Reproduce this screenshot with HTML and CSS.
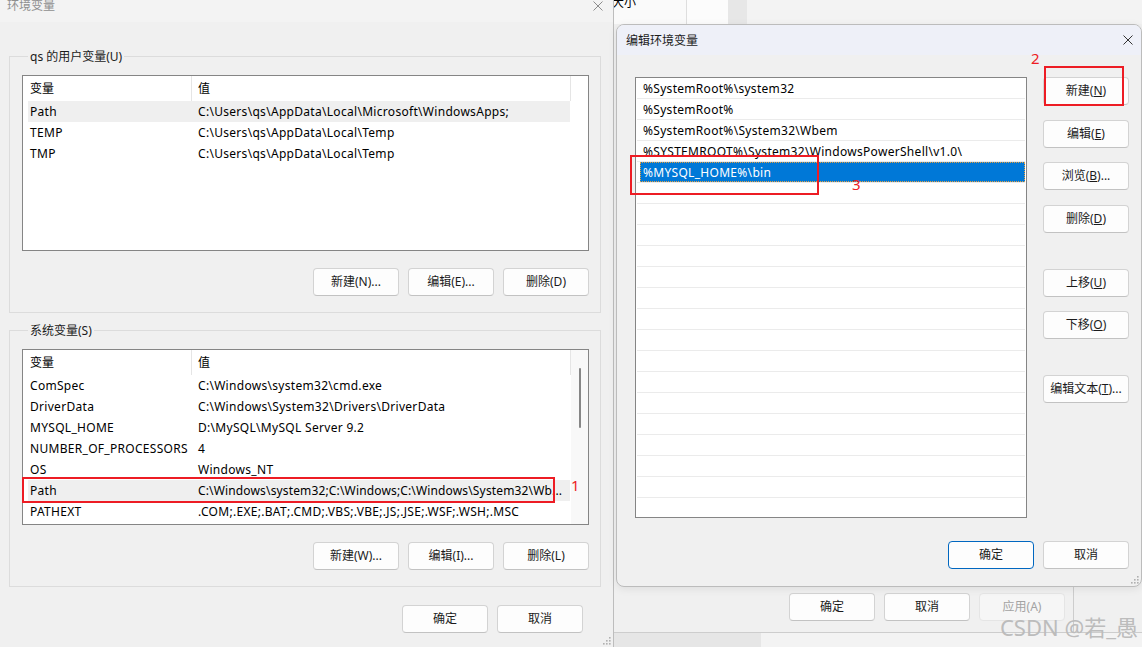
FILE: index.html
```html
<!DOCTYPE html>
<html lang="zh-CN">
<head>
  <meta charset="UTF-8" />
  <title>编辑环境变量</title>
  <link rel="stylesheet" href="styles.css">
</head>
<body>
  <div class="desktop">

    <!-- 系统属性 (后面的窗口) -->
    <div class="win-props">
      <div class="props-top">
        <div class="tab-a"><span>大小</span></div>
        <div class="tab-b"></div>
        <div class="tab-c"></div>
        <div class="tab-d"></div>
      </div>
      <div class="props-body"></div>
      <div class="props-footer">
        <div class="props-btns">
          <button class="btn">确定</button>
          <button class="btn">取消</button>
          <button class="btn" disabled>应用(A)</button>
        </div>
      </div>
      <div class="props-status">
        <div class="status-left"></div>
      </div>
    </div>

    <!-- 环境变量 -->
    <div class="win-env">
      <div class="env-title">
        <span class="title-text">环境变量</span>
        <svg class="close-x gray" width="10" height="10" viewBox="0 0 10 10">
          <path d="M0.5 0.5 L9.5 9.5 M9.5 0.5 L0.5 9.5" />
        </svg>
      </div>

      <div class="env-body">
        <div class="group">
          <div class="group-label">qs 的用户变量(U)</div>
          <div class="listview">
            <div class="lv-main">
              <div class="lv-head">
                <div class="h1">变量</div>
                <div class="h2">值</div>
              </div>
              <div class="lv-row sel">
                <div class="c1">Path</div>
                <div class="c2">C:\Users\qs\AppData\Local\Microsoft\WindowsApps;</div>
              </div>
              <div class="lv-row">
                <div class="c1">TEMP</div>
                <div class="c2">C:\Users\qs\AppData\Local\Temp</div>
              </div>
              <div class="lv-row">
                <div class="c1">TMP</div>
                <div class="c2">C:\Users\qs\AppData\Local\Temp</div>
              </div>
            </div>
          </div>
          <div class="btn-row">
            <button class="btn">新建(N)...</button>
            <button class="btn">编辑(E)...</button>
            <button class="btn">删除(D)</button>
          </div>
        </div>

        <div class="group group-sys">
          <div class="group-label">系统变量(S)</div>
          <div class="listview">
            <div class="lv-main">
              <div class="lv-head">
                <div class="h1">变量</div>
                <div class="h2">值</div>
              </div>
              <div class="lv-row">
                <div class="c1">ComSpec</div>
                <div class="c2">C:\Windows\system32\cmd.exe</div>
              </div>
              <div class="lv-row">
                <div class="c1">DriverData</div>
                <div class="c2">C:\Windows\System32\Drivers\DriverData</div>
              </div>
              <div class="lv-row">
                <div class="c1">MYSQL_HOME</div>
                <div class="c2">D:\MySQL\MySQL Server 9.2</div>
              </div>
              <div class="lv-row">
                <div class="c1">NUMBER_OF_PROCESSORS</div>
                <div class="c2">4</div>
              </div>
              <div class="lv-row">
                <div class="c1">OS</div>
                <div class="c2">Windows_NT</div>
              </div>
              <div class="lv-row sel">
                <div class="c1">Path</div>
                <div class="c2 tight">C:\Windows\system32;C:\Windows;C:\Windows\System32\Wb...</div>
              </div>
              <div class="lv-row">
                <div class="c1">PATHEXT</div>
                <div class="c2">.COM;.EXE;.BAT;.CMD;.VBS;.VBE;.JS;.JSE;.WSF;.WSH;.MSC</div>
              </div>
            </div>
            <div class="lv-scroll"><div class="thumb"></div></div>
          </div>
          <div class="btn-row">
            <button class="btn">新建(W)...</button>
            <button class="btn">编辑(I)...</button>
            <button class="btn">删除(L)</button>
          </div>
        </div>

        <div class="btn-row dialog-btns">
          <button class="btn">确定</button>
          <button class="btn">取消</button>
        </div>
      </div>

      <svg class="grip" width="10" height="10" viewBox="0 0 10 10">
        <rect x="8" y="1" width="1.6" height="1.6" />
        <rect x="5" y="4" width="1.6" height="1.6" />
        <rect x="8" y="4" width="1.6" height="1.6" />
        <rect x="2" y="7" width="1.6" height="1.6" />
        <rect x="5" y="7" width="1.6" height="1.6" />
        <rect x="8" y="7" width="1.6" height="1.6" />
      </svg>
    </div>

    <!-- 编辑环境变量 -->
    <div class="win-edit">
      <div class="edit-title">
        <span>编辑环境变量</span>
        <svg class="close-x" width="10" height="10" viewBox="0 0 10 10">
          <path d="M0.5 0.5 L9.5 9.5 M9.5 0.5 L0.5 9.5" />
        </svg>
      </div>

      <div class="edit-body">
        <div class="edit-main">
          <div class="pathlist">
            <div class="pl-row"><span>%SystemRoot%\system32</span></div>
            <div class="pl-row"><span>%SystemRoot%</span></div>
            <div class="pl-row"><span>%SystemRoot%\System32\Wbem</span></div>
            <div class="pl-row"><span>%SYSTEMROOT%\System32\WindowsPowerShell\v1.0\</span></div>
            <div class="pl-row sel"><span>%MYSQL_HOME%\bin</span></div>
            <div class="pl-row"><span></span></div>
            <div class="pl-row"><span></span></div>
            <div class="pl-row"><span></span></div>
            <div class="pl-row"><span></span></div>
            <div class="pl-row"><span></span></div>
            <div class="pl-row"><span></span></div>
            <div class="pl-row"><span></span></div>
            <div class="pl-row"><span></span></div>
            <div class="pl-row"><span></span></div>
            <div class="pl-row"><span></span></div>
            <div class="pl-row"><span></span></div>
            <div class="pl-row"><span></span></div>
            <div class="pl-row"><span></span></div>
            <div class="pl-row"><span></span></div>
            <div class="pl-row"><span></span></div>
            <div class="pl-row"><span></span></div>
          </div>

          <div class="side-btns">
            <button class="btn">新建(<u>N</u>)</button>
            <button class="btn">编辑(<u>E</u>)</button>
            <button class="btn">浏览(<u>B</u>)...</button>
            <button class="btn">删除(<u>D</u>)</button>
            <button class="btn spaced">上移(<u>U</u>)</button>
            <button class="btn">下移(<u>O</u>)</button>
            <button class="btn spaced">编辑文本(<u>T</u>)...</button>
          </div>
        </div>

        <div class="edit-footer">
          <button class="btn default">确定</button>
          <button class="btn">取消</button>
        </div>
      </div>

      <svg class="grip" width="10" height="10" viewBox="0 0 10 10">
        <rect x="8" y="1" width="1.6" height="1.6" />
        <rect x="5" y="4" width="1.6" height="1.6" />
        <rect x="8" y="4" width="1.6" height="1.6" />
        <rect x="2" y="7" width="1.6" height="1.6" />
        <rect x="5" y="7" width="1.6" height="1.6" />
        <rect x="8" y="7" width="1.6" height="1.6" />
      </svg>
    </div>

    <!-- 红色标注 -->
    <div class="mark mark-1"></div>
    <span class="mark-num num-1">1</span>
    <div class="mark mark-2"></div>
    <span class="mark-num num-2">2</span>
    <div class="mark mark-3"></div>
    <span class="mark-num num-3">3</span>

    <div class="watermark">CSDN @若_愚</div>
  </div>
</body>
</html>
```

FILE: styles.css
```css
* {
  margin: 0;
  padding: 0;
  box-sizing: border-box;
}

body {
  width: 1142px;
  height: 647px;
  overflow: hidden;
  background: #f0f0f0;
  font-family: "Noto Sans", "Noto Sans CJK SC", sans-serif;
  font-size: 12px;
  color: #000;
}

.desktop {
  position: relative;
  width: 1142px;
  height: 647px;
  overflow: hidden;
}

/* buttons */
.btn {
  width: 86px;
  height: 28px;
  padding: 0;
  font-family: inherit;
  font-size: 12px;
  line-height: 26px;
  color: #1b1b1b;
  background: #fdfdfd;
  border: 1px solid #d3d3d3;
  border-bottom-color: #c2c2c2;
  border-radius: 4px;
  text-align: center;
  white-space: nowrap;
}

.btn:disabled {
  background: #f6f6f6;
  border-color: #e5e5e5;
  color: #a3a3a3;
}

.btn.default {
  border-color: #0067c0;
}

.close-x path {
  stroke: #333;
  stroke-width: 1;
  fill: none;
}

.close-x.gray path {
  stroke: #8c8c8c;
}

.grip {
  position: absolute;
  right: 2px;
  bottom: 1px;
}

.grip rect {
  fill: #b0b0b0;
}

/* ---- back window ---- */
.win-props {
  position: absolute;
  left: 614px;
  top: 0;
  width: 528px;
  height: 647px;
  display: flex;
  flex-direction: column;
  background: #f0f0f0;
}

.props-top {
  display: flex;
  height: 24px;
  overflow: hidden;
}

.tab-a {
  width: 72px;
  background: #fafafa;
}

.tab-a span {
  display: block;
  margin: -5px 0 0 -2px;
  line-height: 16px;
}

.tab-b {
  width: 42px;
  background: #fcfcfc;
  border-left: 1px solid #dedede;
}

.tab-c {
  width: 19px;
  background: #e7e7e7;
}

.tab-d {
  flex: 1;
  background: #f3f3f3;
}

.props-body {
  flex: 1;
}

.props-footer {
  height: 47px;
  border-bottom: 1px solid #cdcdcd;
}

.props-btns {
  width: 460px;
  height: 46px;
  display: flex;
  justify-content: flex-end;
  gap: 9px;
  padding: 7px 8px 0 0;
  border-right: 1px solid #cdcdcd;
}

.props-status {
  height: 14px;
  background: #f3f3f3;
}

.status-left {
  width: 147px;
  height: 100%;
  background: #e6e6e6;
}

/* ---- 环境变量 ---- */
.win-env {
  position: absolute;
  left: 0;
  top: 0;
  width: 614px;
  height: 647px;
  background: #f0f0f0;
  border-right: 1px solid #bdbdbd;
}

.env-title {
  height: 22px;
  display: flex;
  justify-content: space-between;
  align-items: flex-start;
  background: #f3f3f3;
  padding: 0 10px 0 7px;
}

.title-text {
  margin-top: -2px;
  line-height: 16px;
  color: #8f8f8f;
}

.env-title .close-x {
  margin-top: 1px;
}

.env-body {
  padding: 34px 0 0 9px;
}

.group {
  width: 592px;
  border: 1px solid #dcdcdc;
  padding: 0 11px 16px 12px;
}

.group-sys {
  margin-top: 17px;
}

.group-label {
  width: fit-content;
  margin: -8px 0 0 6px;
  padding: 0 2px;
  line-height: 16px;
  background: #f0f0f0;
  color: #1b1b1b;
}

.listview {
  display: flex;
  width: 567px;
  height: 176px;
  margin-top: 10px;
  border: 1px solid #858585;
  background: #fff;
  overflow: hidden;
}

.lv-main {
  flex: 1;
}

.lv-head {
  display: flex;
  height: 25px;
  line-height: 25px;
}

.h1 {
  width: 169px;
  padding-left: 7px;
  border-right: 1px solid #e5e5e5;
}

.h2 {
  width: 379px;
  padding-left: 6px;
  border-right: 1px solid #e5e5e5;
}

.lv-row {
  display: flex;
  width: 542px;
  height: 21px;
  margin-left: 5px;
  line-height: 21px;
  letter-spacing: 0.3px;
}

.lv-row.sel {
  background: #efefef;
}

.c1 {
  width: 163px;
  padding-left: 2px;
  white-space: nowrap;
}

.c2 {
  flex: 1;
  padding-left: 7px;
  white-space: nowrap;
  overflow: hidden;
}

.c2.tight {
  letter-spacing: 0.15px;
}

.lv-scroll {
  width: 18px;
  background: #f8f8f8;
}

.thumb {
  width: 2px;
  height: 60px;
  margin: 18px 0 0 8px;
  border-radius: 1px;
  background: #868686;
}

.btn-row {
  display: flex;
  justify-content: flex-end;
  gap: 9px;
  margin-top: 17px;
}

.dialog-btns {
  width: 592px;
  margin-top: 18px;
  padding-right: 18px;
}

/* ---- 编辑环境变量 ---- */
.win-edit {
  position: absolute;
  left: 616px;
  top: 24px;
  width: 526px;
  height: 563px;
  background: #f0f0f0;
  border: 1px solid #bcbcbc;
  border-radius: 8px;
  overflow: hidden;
  box-shadow: 0 2px 8px rgba(0, 0, 0, 0.08);
}

.edit-title {
  height: 30px;
  display: flex;
  justify-content: space-between;
  align-items: center;
  padding: 0 8px 0 9px;
  background: #eef0f8;
  color: #1b1b1b;
}

.edit-title span {
  margin-top: -1px;
}

.edit-body {
  padding: 22px 12px 0 18px;
}

.edit-main {
  display: flex;
}

.pathlist {
  width: 392px;
  height: 441px;
  border: 1px solid #858585;
  background: #fff;
  overflow: hidden;
}

.pl-row {
  height: 21px;
  margin: 0 1px;
  border-bottom: 1px solid #ebebeb;
}

.pl-row span {
  display: block;
  height: 20px;
  margin-left: 3px;
  padding-left: 3px;
  line-height: 21px;
  letter-spacing: 0.3px;
  white-space: nowrap;
}

.pl-row.sel span {
  background: #0078d7;
  color: #fff;
  outline: 1px dotted #e6a040;
  outline-offset: -1px;
}

.side-btns {
  display: flex;
  flex-direction: column;
  margin-left: 16px;
}

.side-btns .btn + .btn {
  margin-top: 14.6px;
}

.side-btns .btn.spaced {
  margin-top: 36px;
}

.edit-footer {
  display: flex;
  justify-content: flex-end;
  gap: 9px;
  margin-top: 23px;
}

/* ---- 标注 ---- */
.mark {
  position: absolute;
  border: 2px solid #ed1c24;
}

.mark-1 {
  left: 22px;
  top: 477px;
  width: 533px;
  height: 26px;
}

.mark-2 {
  left: 1044px;
  top: 66px;
  width: 80px;
  height: 40px;
}

.mark-3 {
  left: 630px;
  top: 155px;
  width: 189px;
  height: 40px;
}

.mark-num {
  position: absolute;
  font-family: "Noto Sans", sans-serif;
  font-size: 15px;
  line-height: 15px;
  color: #ed1c24;
}

.num-1 {
  left: 571px;
  top: 478px;
}

.num-2 {
  left: 1031px;
  top: 51px;
}

.num-3 {
  left: 852px;
  top: 177px;
}

.watermark {
  position: absolute;
  right: 4px;
  top: 620px;
  font-size: 22px;
  line-height: 14px;
  color: #bcbcbc;
  white-space: nowrap;
}
```
